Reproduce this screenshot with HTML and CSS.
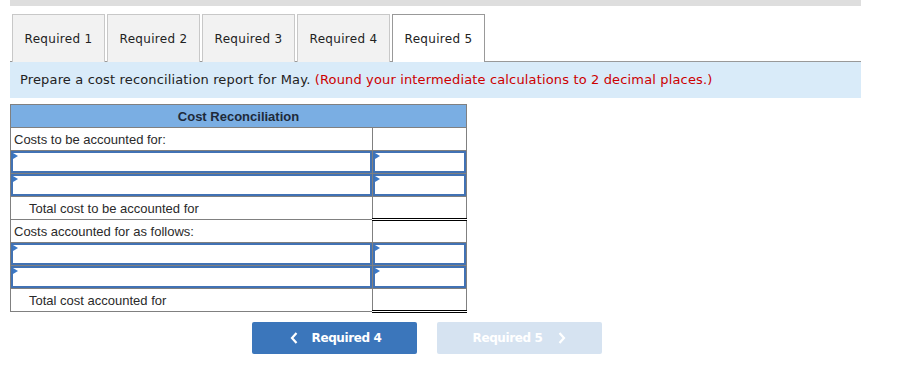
FILE: index.html
```html
<!DOCTYPE html>
<html lang="en">
<head>
  <meta charset="UTF-8" />
  <title>Required 5</title>
  <link rel="stylesheet" href="styles.css">
</head>
<body>
  <div class="page">
    <div class="topbar"></div>

    <div class="tabs">
      <div class="tab">Required 1</div>
      <div class="tab">Required 2</div>
      <div class="tab">Required 3</div>
      <div class="tab">Required 4</div>
      <div class="tab active">Required 5</div>
    </div>

    <div class="prompt">
      Prepare a cost reconciliation report for May. <span class="note">(Round your intermediate calculations to 2 decimal places.)</span>
    </div>

    <table class="recon">
      <tr><th colspan="2">Cost Reconciliation</th></tr>
      <tr><td class="label">Costs to be accounted for:</td><td class="val"></td></tr>
      <tr><td class="in"><div class="field"></div></td><td class="in"><div class="field"></div></td></tr>
      <tr><td class="in"><div class="field"></div></td><td class="in"><div class="field"></div></td></tr>
      <tr><td class="label total">Total cost to be accounted for</td><td class="val sum"></td></tr>
      <tr><td class="label">Costs accounted for as follows:</td><td class="val"></td></tr>
      <tr><td class="in"><div class="field"></div></td><td class="in"><div class="field"></div></td></tr>
      <tr><td class="in"><div class="field"></div></td><td class="in"><div class="field"></div></td></tr>
      <tr><td class="label total">Total cost accounted for</td><td class="val sum"></td></tr>
    </table>

    <div class="nav">
      <button class="btn prev">
        <svg class="chev" width="8" height="12" viewBox="0 0 8 12"><path d="M6.5 1 L2 6 L6.5 11" fill="none" stroke="#fff" stroke-width="2.2"/></svg>
        Required 4
      </button>
      <button class="btn next">
        Required 5
        <svg class="chev" width="8" height="12" viewBox="0 0 8 12"><path d="M1.5 1 L6 6 L1.5 11" fill="none" stroke="#fff" stroke-width="2.2"/></svg>
      </button>
    </div>
  </div>
</body>
</html>
```

FILE: styles.css
```css
* { box-sizing: border-box; }

body {
  margin: 0;
  background: #fff;
  font-family: "DejaVu Sans", Verdana, sans-serif;
  color: #222;
}

.page {
  padding-left: 10px;
  width: 861px;
}

.topbar {
  height: 6px;
  background: #dedede;
  margin-bottom: 8px;
}

.tabs {
  display: flex;
  gap: 2px;
  padding-left: 2px;
  border-bottom: 1px solid #999;
  height: 48px;
}

.tab {
  width: 93px;
  height: 48px;
  background: #f2f2f2;
  border: 1px solid #c8c8c8;
  border-bottom: none;
  font-size: 12px;
  letter-spacing: 0.3px;
  line-height: 48px;
  text-align: center;
  color: #222;
}

.tab.active {
  background: #fff;
  border-color: #999;
  margin-bottom: -1px;
  position: relative;
}

.prompt {
  background: #d9ebf9;
  height: 36px;
  padding: 0 10px;
  font-size: 13px;
  letter-spacing: 0.15px;
  line-height: 36px;
  color: #222;
}

.note {
  color: #c00;
}

.recon {
  margin-top: 6px;
  width: 457px;
  border-collapse: collapse;
  font-family: "Liberation Sans", Arial, sans-serif;
  font-size: 13px;
  color: #2a2a2a;
}

.recon th {
  background: #7aaee3;
  border: 1px solid #808080;
  height: 23px;
  padding: 0;
  font-weight: bold;
  font-size: 13px;
  color: #1e2a3a;
}

.recon td {
  border: 1px solid #808080;
  height: 23px;
  padding: 0;
}

.recon td.label {
  padding-left: 3px;
}

.recon td.total {
  padding-left: 18px;
}

.recon td.val {
  width: 94px;
}

.recon td.sum {
  border-top: 1px solid #000;
  border-bottom: 3px double #000;
}

.recon td.in {
  height: 22px;
}

.field {
  position: relative;
  height: 22px;
  border: 2px solid #4172b4;
}

.field::before {
  content: "";
  position: absolute;
  left: 0;
  top: 0;
  border-left: 5px solid #3a78c6;
  border-top: 3px solid transparent;
  border-bottom: 3px solid transparent;
}

.nav {
  display: flex;
  gap: 20px;
  margin-top: 9px;
  padding-left: 242px;
}

.btn {
  display: flex;
  align-items: center;
  justify-content: center;
  gap: 14px;
  width: 165px;
  height: 32px;
  border: none;
  border-radius: 2px;
  color: #fff;
  font-family: "DejaVu Sans", Verdana, sans-serif;
  font-size: 12px;
  letter-spacing: -0.4px;
  font-weight: bold;
}

.btn.prev {
  background: #3b76bb;
  padding-right: 4px;
}

.btn.next {
  background: #d6e3f1;
  gap: 16px;
  padding-left: 6px;
}
```
